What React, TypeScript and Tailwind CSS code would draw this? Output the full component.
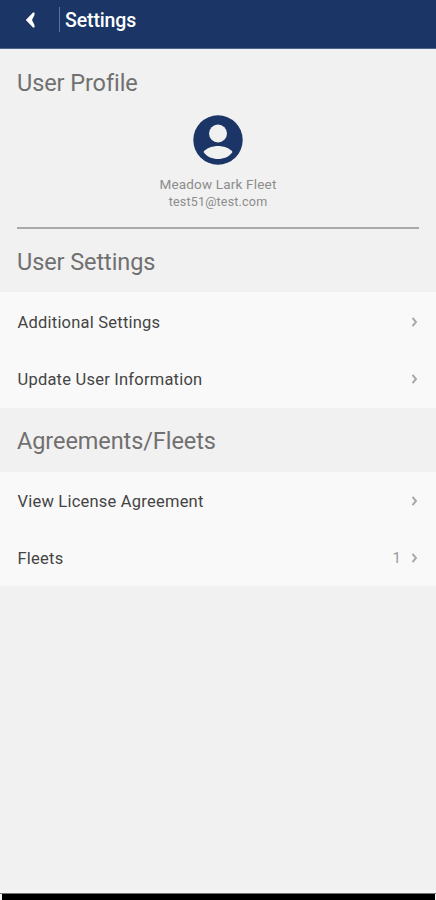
import React from "react";

function Chevron() {
  return (
    <svg width="8" height="12" viewBox="0 0 8 12" className="block" fill="none">
      <path d="M1.5 1.8L5 6L1.5 10.2" stroke="#a9a9a9" strokeWidth="2" />
    </svg>
  );
}

function Heading({ text, className }: { text: string; className: string }) {
  return (
    <h2 className={`flex items-center pl-[17px] text-[23.5px] leading-7 font-normal tracking-[-0.08px] whitespace-nowrap text-[#707070] ${className}`}>
      {text}
    </h2>
  );
}

function Row({ label, value }: { label: string; value?: string }) {
  return (
    <div className="flex h-[57px] items-center pr-[17px] pl-[17.5px] text-[#444444]">
      <span className="flex-1 pt-[2px] text-[16.5px] leading-6 tracking-[0.22px]">{label}</span>
      {value && <span className="mr-[10px] pt-[2px] text-[15px] text-[#999999]">{value}</span>}
      <Chevron />
    </div>
  );
}

export default function App() {
  return (
    <div className="flex h-[900px] w-[436px] flex-col overflow-hidden bg-[#f1f1f1] font-['Roboto',sans-serif]">
      <header className="flex h-[49px] shrink-0 items-start border-b border-[#52668c] bg-[#1a3566]">
        <svg width="12" height="16" viewBox="0 0 12 16" className="mt-3 ml-[25px]">
          <path d="M8 0.5H9.5V3L7 8L9.5 13V15.5H8L0.8 8Z" fill="#fff" />
        </svg>
        <div className="mt-[7px] ml-[22px] h-[25px] w-px bg-[#5d7295]" />
        <h1 className="mt-[9px] ml-[5px] text-[19.5px] leading-6 font-medium tracking-[-0.12px] text-white">Settings</h1>
      </header>
      <Heading text="User Profile" className="mt-[20px]" />
      <div className="mt-[18px] flex flex-col items-center">
        <svg width="50" height="50" viewBox="0 0 50 50">
          <circle cx="25" cy="25" r="24.7" fill="#1a3566" />
          <circle cx="25" cy="18.5" r="9" fill="#f1f1f1" />
          <path d="M10.5 37C13 33 20 31 25 31S37 33 39.5 37C36 42 30.5 44 25 44S14 42 10.5 37Z" fill="#f1f1f1" />
        </svg>
        <div className="mt-[10px] text-[13.5px] leading-[18px] tracking-[0.18px] text-[#8c8c8c]">Meadow Lark Fleet</div>
        <div className="text-[12.5px] leading-[18px] tracking-[0.2px] text-[#8c8c8c]">test51@test.com</div>
      </div>
      <div className="mx-[17px] mt-[16px] h-[2px] shrink-0 bg-[#a9a9a9]" />
      <Heading text="User Settings" className="h-[63px] pt-[2px]" />
      <section className="h-[116px] bg-[#f9f9f9] pt-[1px]">
        <Row label="Additional Settings" />
        <Row label="Update User Information" />
      </section>
      <Heading text="Agreements/Fleets" className="h-[64px] pt-[2px]" />
      <section className="h-[114px] bg-[#f9f9f9]">
        <Row label="View License Agreement" />
        <Row label="Fleets" value="1" />
      </section>
      <div className="mt-auto flex h-[10px] shrink-0 flex-col bg-[#f8f8f8] pt-[3px]">
        <div className="h-px bg-[#777777]" />
        <div className="mr-px ml-[2px] flex-1 bg-black" />
      </div>
    </div>
  );
}
